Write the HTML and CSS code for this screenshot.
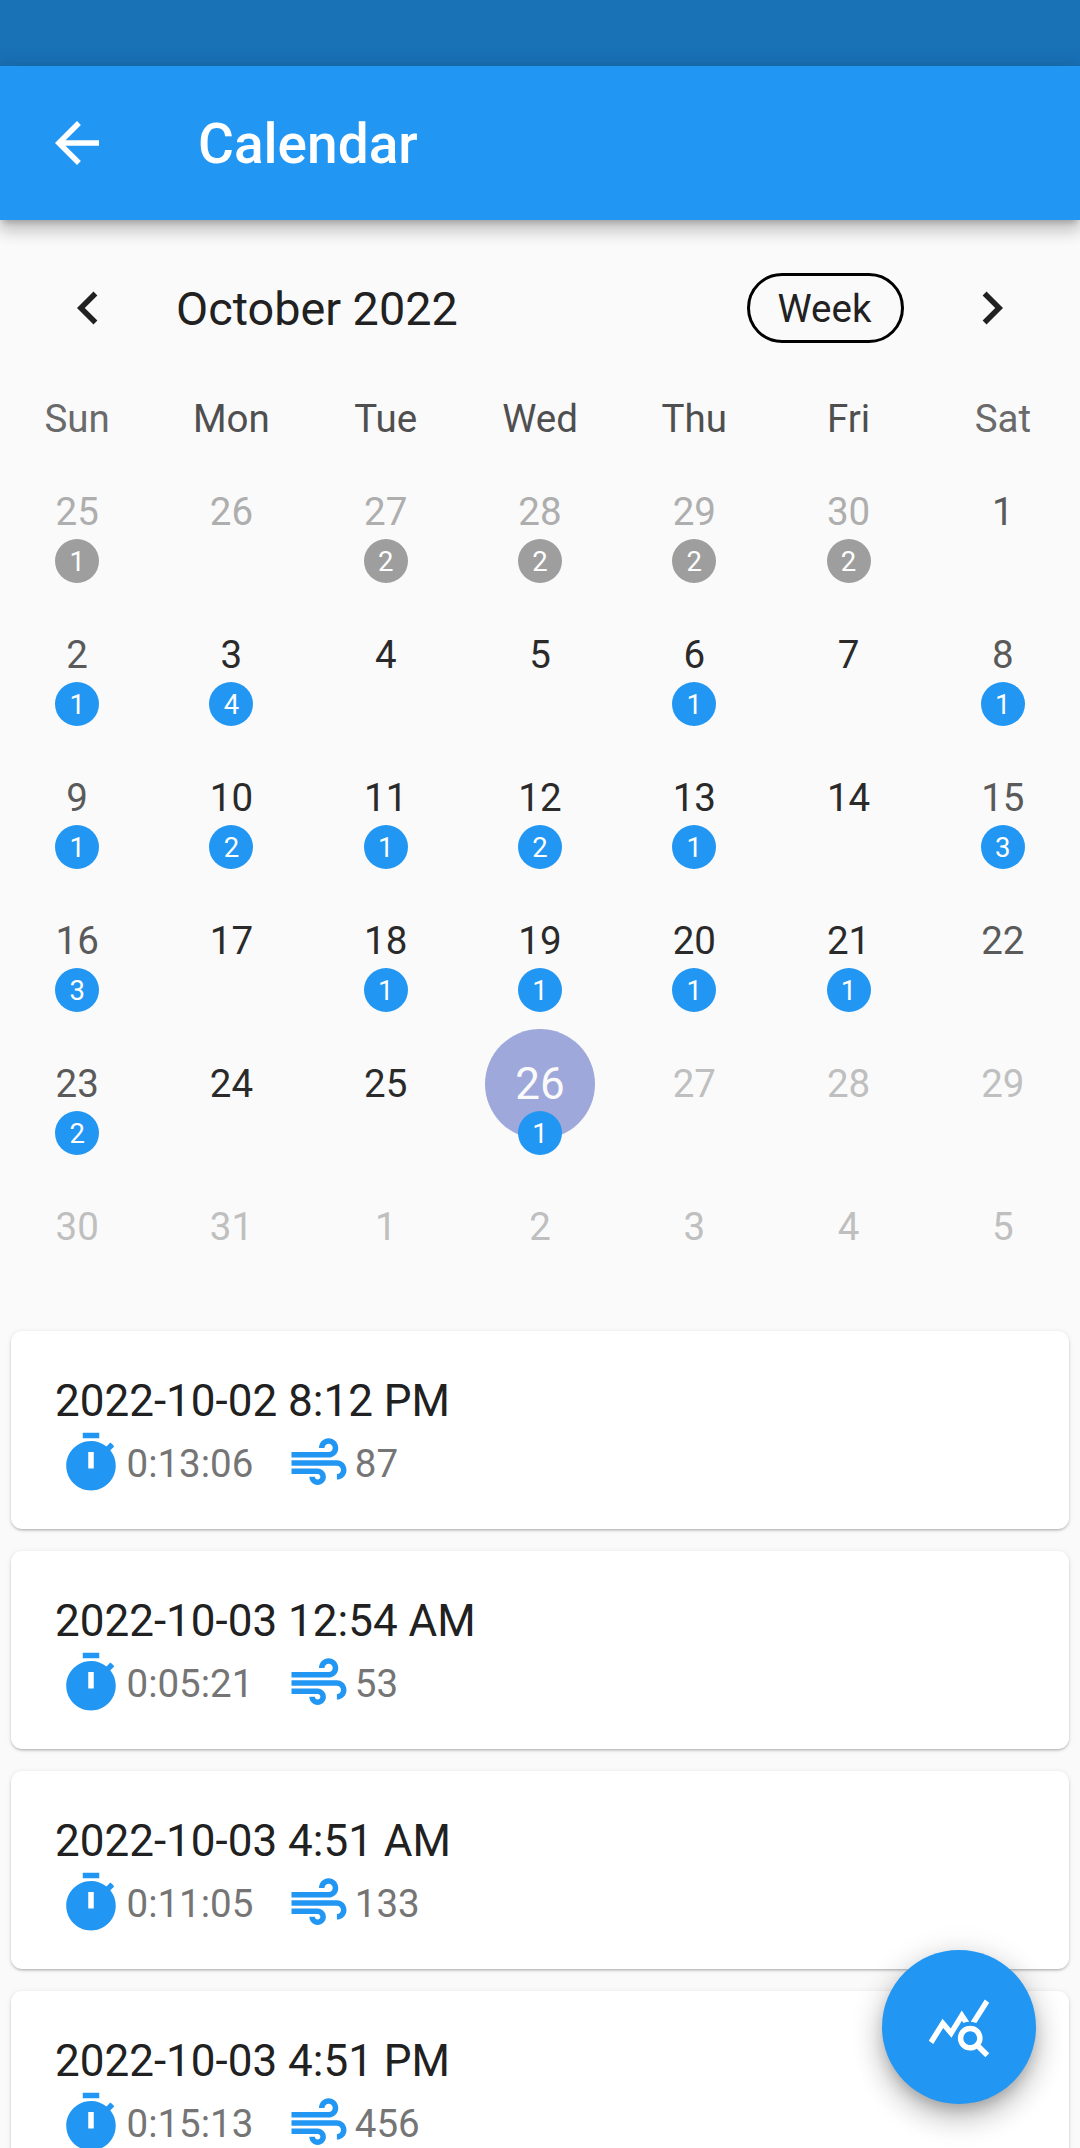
FILE: index.html
```html
<!DOCTYPE html>
<html lang="en">
<head>
<meta charset="utf-8">
<title>Calendar</title>
<link rel="stylesheet" href="styles.css">
</head>
<body>
<div class="page">
  <div class="status"></div>
  <header class="appbar">
    <svg class="icon back" viewBox="0 0 24 24"><path d="M20 11H7.83l5.59-5.59L12 4l-8 8 8 8 1.41-1.41L7.83 13H20v-2z"/></svg>
    <h1 class="title">Calendar</h1>
  </header>
  <main class="calendar">
    <div class="cal-head">
      <svg class="icon chev" viewBox="0 0 24 24"><path d="M15.41 7.41L14 6l-6 6 6 6 1.41-1.41L10.83 12z"/></svg>
      <div class="month">October 2022</div>
      <div class="format">Week</div>
      <svg class="icon chev" viewBox="0 0 24 24"><path d="M10 6L8.59 7.41 13.17 12l-4.58 4.59L10 18l6-6z"/></svg>
    </div>
    <div class="dow">
      <div class="we">Sun</div><div>Mon</div><div>Tue</div><div>Wed</div><div>Thu</div><div>Fri</div><div class="we">Sat</div>
    </div>
    <div class="grid">
      <div class="cell out">25<span class="badge grey">1</span></div>
      <div class="cell out">26</div>
      <div class="cell out">27<span class="badge grey">2</span></div>
      <div class="cell out">28<span class="badge grey">2</span></div>
      <div class="cell out">29<span class="badge grey">2</span></div>
      <div class="cell out">30<span class="badge grey">2</span></div>
      <div class="cell we">1</div>

      <div class="cell we">2<span class="badge">1</span></div>
      <div class="cell">3<span class="badge">4</span></div>
      <div class="cell">4</div>
      <div class="cell">5</div>
      <div class="cell">6<span class="badge">1</span></div>
      <div class="cell">7</div>
      <div class="cell we">8<span class="badge">1</span></div>

      <div class="cell we">9<span class="badge">1</span></div>
      <div class="cell">10<span class="badge">2</span></div>
      <div class="cell">11<span class="badge">1</span></div>
      <div class="cell">12<span class="badge">2</span></div>
      <div class="cell">13<span class="badge">1</span></div>
      <div class="cell">14</div>
      <div class="cell we">15<span class="badge">3</span></div>

      <div class="cell we">16<span class="badge">3</span></div>
      <div class="cell">17</div>
      <div class="cell">18<span class="badge">1</span></div>
      <div class="cell">19<span class="badge">1</span></div>
      <div class="cell">20<span class="badge">1</span></div>
      <div class="cell">21<span class="badge">1</span></div>
      <div class="cell we">22</div>

      <div class="cell we">23<span class="badge">2</span></div>
      <div class="cell">24</div>
      <div class="cell">25</div>
      <div class="cell selected"><span class="disc">26</span><span class="badge">1</span></div>
      <div class="cell off">27</div>
      <div class="cell off">28</div>
      <div class="cell off">29</div>

      <div class="cell off">30</div>
      <div class="cell off">31</div>
      <div class="cell off">1</div>
      <div class="cell off">2</div>
      <div class="cell off">3</div>
      <div class="cell off">4</div>
      <div class="cell off">5</div>
    </div>
    <section class="list">
      <article class="card">
        <div class="when">2022-10-02 8:12 PM</div>
        <div class="stats">
          <svg class="icon timer" viewBox="0 0 24 24"><path fill-rule="evenodd" d="M9 1h6v2H9zM19.03 7.39l1.42-1.42c-.43-.51-.9-.99-1.41-1.41l-1.42 1.42C16.07 4.74 14.12 4 12 4c-4.97 0-9 4.03-9 9s4.02 9 9 9 9-4.03 9-9c0-2.12-.74-4.07-1.97-5.61zM13 14h-2V8h2v6z"/></svg>
          <span class="val">0:13:06</span>
          <svg class="icon air" viewBox="0 0 24 24"><path d="M14.5 17c0 1.65-1.35 3-3 3s-3-1.35-3-3h2c0 .55.45 1 1 1s1-.45 1-1-.45-1-1-1H2v-2h9.5c1.65 0 3 1.35 3 3zM19 6.5C19 4.57 17.43 3 15.5 3S12 4.57 12 6.5h2c0-.83.67-1.5 1.5-1.5s1.5.67 1.5 1.5S16.33 8 15.5 8H2v2h13.5c1.93 0 3.5-1.57 3.5-3.5zm-.5 4.5H2v2h16.5c.83 0 1.5.67 1.5 1.5s-.67 1.5-1.5 1.5v2c1.93 0 3.5-1.57 3.5-3.5S20.43 11 18.5 11z"/></svg>
          <span class="val">87</span>
        </div>
      </article>
      <article class="card">
        <div class="when">2022-10-03 12:54 AM</div>
        <div class="stats">
          <svg class="icon timer" viewBox="0 0 24 24"><path fill-rule="evenodd" d="M9 1h6v2H9zM19.03 7.39l1.42-1.42c-.43-.51-.9-.99-1.41-1.41l-1.42 1.42C16.07 4.74 14.12 4 12 4c-4.97 0-9 4.03-9 9s4.02 9 9 9 9-4.03 9-9c0-2.12-.74-4.07-1.97-5.61zM13 14h-2V8h2v6z"/></svg>
          <span class="val">0:05:21</span>
          <svg class="icon air" viewBox="0 0 24 24"><path d="M14.5 17c0 1.65-1.35 3-3 3s-3-1.35-3-3h2c0 .55.45 1 1 1s1-.45 1-1-.45-1-1-1H2v-2h9.5c1.65 0 3 1.35 3 3zM19 6.5C19 4.57 17.43 3 15.5 3S12 4.57 12 6.5h2c0-.83.67-1.5 1.5-1.5s1.5.67 1.5 1.5S16.33 8 15.5 8H2v2h13.5c1.93 0 3.5-1.57 3.5-3.5zm-.5 4.5H2v2h16.5c.83 0 1.5.67 1.5 1.5s-.67 1.5-1.5 1.5v2c1.93 0 3.5-1.57 3.5-3.5S20.43 11 18.5 11z"/></svg>
          <span class="val">53</span>
        </div>
      </article>
      <article class="card">
        <div class="when">2022-10-03 4:51 AM</div>
        <div class="stats">
          <svg class="icon timer" viewBox="0 0 24 24"><path fill-rule="evenodd" d="M9 1h6v2H9zM19.03 7.39l1.42-1.42c-.43-.51-.9-.99-1.41-1.41l-1.42 1.42C16.07 4.74 14.12 4 12 4c-4.97 0-9 4.03-9 9s4.02 9 9 9 9-4.03 9-9c0-2.12-.74-4.07-1.97-5.61zM13 14h-2V8h2v6z"/></svg>
          <span class="val">0:11:05</span>
          <svg class="icon air" viewBox="0 0 24 24"><path d="M14.5 17c0 1.65-1.35 3-3 3s-3-1.35-3-3h2c0 .55.45 1 1 1s1-.45 1-1-.45-1-1-1H2v-2h9.5c1.65 0 3 1.35 3 3zM19 6.5C19 4.57 17.43 3 15.5 3S12 4.57 12 6.5h2c0-.83.67-1.5 1.5-1.5s1.5.67 1.5 1.5S16.33 8 15.5 8H2v2h13.5c1.93 0 3.5-1.57 3.5-3.5zm-.5 4.5H2v2h16.5c.83 0 1.5.67 1.5 1.5s-.67 1.5-1.5 1.5v2c1.93 0 3.5-1.57 3.5-3.5S20.43 11 18.5 11z"/></svg>
          <span class="val">133</span>
        </div>
      </article>
      <article class="card">
        <div class="when">2022-10-03 4:51 PM</div>
        <div class="stats">
          <svg class="icon timer" viewBox="0 0 24 24"><path fill-rule="evenodd" d="M9 1h6v2H9zM19.03 7.39l1.42-1.42c-.43-.51-.9-.99-1.41-1.41l-1.42 1.42C16.07 4.74 14.12 4 12 4c-4.97 0-9 4.03-9 9s4.02 9 9 9 9-4.03 9-9c0-2.12-.74-4.07-1.97-5.61zM13 14h-2V8h2v6z"/></svg>
          <span class="val">0:15:13</span>
          <svg class="icon air" viewBox="0 0 24 24"><path d="M14.5 17c0 1.65-1.35 3-3 3s-3-1.35-3-3h2c0 .55.45 1 1 1s1-.45 1-1-.45-1-1-1H2v-2h9.5c1.65 0 3 1.35 3 3zM19 6.5C19 4.57 17.43 3 15.5 3S12 4.57 12 6.5h2c0-.83.67-1.5 1.5-1.5s1.5.67 1.5 1.5S16.33 8 15.5 8H2v2h13.5c1.93 0 3.5-1.57 3.5-3.5zm-.5 4.5H2v2h16.5c.83 0 1.5.67 1.5 1.5s-.67 1.5-1.5 1.5v2c1.93 0 3.5-1.57 3.5-3.5S20.43 11 18.5 11z"/></svg>
          <span class="val">456</span>
        </div>
      </article>
    </section>
  </main>
  <button class="fab" type="button" aria-label="Query stats">
    <svg class="icon" viewBox="0 0 24 24"><path d="M19.88 18.47c.44-.7.7-1.51.7-2.39 0-2.49-2.01-4.5-4.5-4.5s-4.5 2.01-4.5 4.5 2.01 4.5 4.49 4.5c.88 0 1.7-.26 2.39-.7L21.58 23 23 21.58l-3.12-3.11zm-3.8.11c-1.38 0-2.5-1.12-2.5-2.5s1.12-2.5 2.5-2.5 2.5 1.12 2.5 2.5-1.12 2.5-2.5 2.5zm-.36-8.5c-.74.02-1.45.18-2.1.45l-.55-.83-3.8 6.18-3.01-3.52-3.63 5.81L1 17l5-8 3 3.5L13 6l2.72 4.08zm2.59.5c-.64-.28-1.33-.45-2.05-.49L21.38 2 23 3.18l-4.69 7.4z"/></svg>
  </button>
</div>
</body>
</html>
```
FILE: styles.css
```css
* { box-sizing: border-box; }
html, body { margin: 0; padding: 0; }
body { font-family: Roboto, "Liberation Sans", sans-serif; background: #fafafa; color: #212121; }

.page { position: relative; width: 1080px; height: 2148px; overflow: hidden; background: #fafafa; }
.icon { display: block; width: 66px; height: 66px; flex: none; fill: currentColor; }

.status { height: 66px; background: #1971b6; }
.appbar {
  position: relative; z-index: 2;
  display: flex; align-items: center;
  height: 154px; padding-left: 44px;
  background: #2196f3; color: #fff;
  box-shadow: 0 5px 6px -3px rgba(0,0,0,.2), 0 11px 14px 1px rgba(0,0,0,.14), 0 3px 20px 3px rgba(0,0,0,.12);
}
.title { margin: 2px 0 0 88px; font-size: 55px; font-weight: 500; line-height: 66px; }

.cal-head { display: flex; align-items: center; height: 66px; margin-top: 55px; padding-left: 55px; color: #212121; }
.month { flex: 1; margin-left: 55px; padding-top: 2px; font-size: 46.75px; line-height: 66px; }
.format {
  display: flex; align-items: center; justify-content: center;
  width: 157px; height: 70px; margin-right: 55px; padding-right: 2px;
  border: 3px solid #000; border-radius: 35px;
  font-size: 38.5px;
}
.cal-head .chev:last-child { margin-right: 55px; }

.dow { display: grid; grid-template-columns: repeat(7, 1fr); height: 44px; margin-top: 55px; padding-top: 1px; font-size: 38.5px; line-height: 44px; text-align: center; color: #4f4f4f; }
.dow .we { color: #6a6a6a; }

.grid { display: grid; grid-template-columns: repeat(7, 1fr); grid-auto-rows: 143px; }
.cell { position: relative; display: flex; align-items: center; justify-content: center; font-size: 38.5px; color: #2a2a2a; }
.cell.we { color: #5a5a5a; }
.cell.out { color: #aeaeae; }
.cell.off { color: #bfbfbf; }
.disc { display: flex; align-items: center; justify-content: center; width: 110px; height: 110px; border-radius: 50%; background: #9fa8da; color: #fafafa; font-size: 44px; }
.badge {
  position: absolute; left: 50%; top: 99px;
  display: flex; align-items: center; justify-content: center;
  width: 44px; height: 44px; margin-left: -22px;
  border-radius: 50%; background: #2196f3; color: #fff;
  font-size: 27.5px;
}
.badge.grey { background: #9e9e9e; }

.list { display: flex; flex-direction: column; gap: 22px; margin-top: 33px; padding: 0 11px; }
.card {
  height: 198px; padding: 44px 44px 0;
  background: #fff; border-radius: 11px;
  box-shadow: 0 2px 3px -1px rgba(0,0,0,.2), 0 1px 3px rgba(0,0,0,.12), 0 1px 6px rgba(0,0,0,.06);
  flex: none;
}
.when { font-size: 44px; line-height: 52px; color: #212121; }
.stats { display: flex; align-items: center; height: 66px; margin-top: 3px; font-size: 38.5px; color: #757575; }
.timer { margin-left: 3px; color: #2196f3; }
.air { margin-left: 33px; color: #2196f3; }
.val { line-height: 66px; margin-left: 2.5px; padding-top: 1px; }

.fab {
  position: absolute; right: 44px; bottom: 44px; z-index: 3;
  display: flex; align-items: center; justify-content: center;
  width: 154px; height: 154px; padding: 0;
  border: 0; border-radius: 50%;
  background: #2196f3; color: #fff;
  box-shadow: 0 8px 14px -3px rgba(0,0,0,.2), 0 16px 28px 2px rgba(0,0,0,.14), 0 5px 30px 4px rgba(0,0,0,.12);
}
```
